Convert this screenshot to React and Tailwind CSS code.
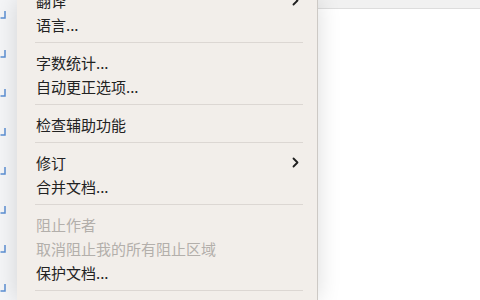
import React from 'react';

const rows = [
  { type: 'item', label: '翻译', sub: true },
  { type: 'item', label: '语言...' },
  { type: 'sep' },
  { type: 'item', label: '字数统计...' },
  { type: 'item', label: '自动更正选项...' },
  { type: 'sep' },
  { type: 'item', label: '检查辅助功能' },
  { type: 'sep' },
  { type: 'item', label: '修订', sub: true },
  { type: 'item', label: '合并文档...' },
  { type: 'sep' },
  { type: 'item', label: '阻止作者', disabled: true },
  { type: 'item', label: '取消阻止我的所有阻止区域', disabled: true },
  { type: 'item', label: '保护文档...' },
  { type: 'sep' },
];

const Chevron = () => (
  <svg width="7" height="11" viewBox="0 0 7 11" fill="none">
    <path d="M1.5 1.5 L5.5 5.5 L1.5 9.5" stroke="#1f1f1f" strokeWidth="1.8" strokeLinecap="round" strokeLinejoin="round" />
  </svg>
);

const Mark = () => (
  <svg width="7" height="8" viewBox="0 0 7 8" fill="none">
    <path d="M5 0 V7 H0.5" stroke="#5b8fd4" strokeWidth="1.5" />
  </svg>
);

const App = () => {
  return (
    <div
      className="flex h-[300px] w-[480px] overflow-hidden bg-white"
      style={{ fontFamily: '"Noto Sans CJK SC", "Noto Sans", sans-serif' }}
    >
      {/* page margin strip */}
      <div className="flex w-[17px] shrink-0 flex-col gap-[31px] bg-[#f4f5f7] pt-[11px]">
        {Array.from({ length: 8 }).map((_, i) => (
          <Mark key={i} />
        ))}
      </div>

      {/* menu */}
      <div className="relative z-10 w-[301px] shrink-0 border-r border-[#cdc9c5] bg-[#f2eeea] shadow-[0_0_22px_rgba(0,0,0,0.14)]">
        <div className="mt-[-12px] flex flex-col">
          {rows.map((r, i) =>
            r.type === 'sep' ? (
              <div key={i} className="pb-[7px] pl-[18px] pr-[14px] pt-[6px]">
                <div className="h-px bg-[#dcd7d3]" />
              </div>
            ) : (
              <div
                key={i}
                className={`flex h-[24px] items-center justify-between pl-[19px] pr-[18px] text-[15px] leading-none ${
                  r.disabled ? 'text-[#b3afab]' : 'text-[#222222]'
                }`}
              >
                <span>{r.label}</span>
                {r.sub && <Chevron />}
              </div>
            )
          )}
        </div>
      </div>

      {/* document area */}
      <div className="flex flex-1 flex-col bg-white">
        <div className="h-[9px] border-b border-[#dddddd] bg-[#f1f1f1]" />
        <div className="flex-1 bg-white" />
      </div>
    </div>
  );
};

export default App;
